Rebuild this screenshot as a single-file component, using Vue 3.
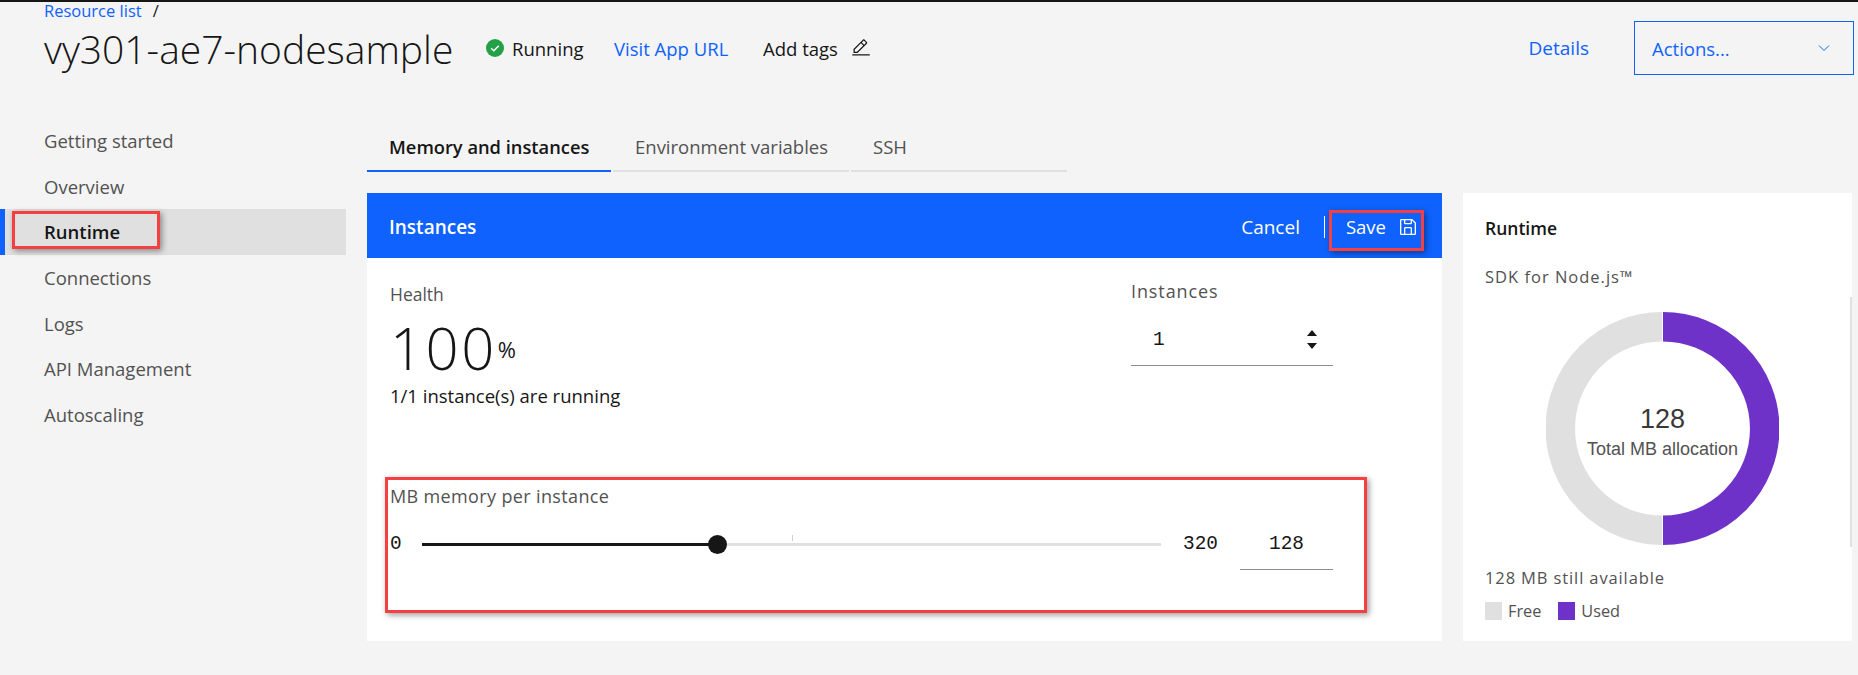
<script setup>
import { computed } from 'vue'

const navItems = ['Getting started', 'Overview', 'Runtime', 'Connections', 'Logs', 'API Management', 'Autoscaling']
const tabs = ['Memory and instances', 'Environment variables', 'SSH']
const memory = 128
const maxMemory = 320
const percent = computed(() => (memory / maxMemory) * 100 + '%')
</script>

<template>
  <div class="page">
    <div class="crumbs"><a class="link">Resource list</a><span class="slash">/</span></div>
    <header class="head">
      <h1>vy301-ae7-nodesample</h1>
      <svg class="status-icon" viewBox="0 0 18 18" width="18" height="18">
        <circle cx="9" cy="9" r="9" fill="#24a148" />
        <path d="M5.2 9.2l2.6 2.6 5-5" fill="none" stroke="#fff" stroke-width="1.5" />
      </svg>
      <span class="status">Running</span>
      <a class="link visit">Visit App URL</a>
      <span class="tags">Add tags</span>
      <svg class="pencil" viewBox="0 0 32 32" width="20" height="20">
        <path fill="#161616" d="M2 26h28v2H2zM25.4 9c.8-.8.8-2 0-2.8l-3.6-3.6c-.8-.8-2-.8-2.8 0l-15 15V24h6.4L25.4 9zM20.4 4L24 7.6l-3 3L17.4 7 20.4 4zM6 22v-3.6l10-10 3.6 3.6-10 10H6z" />
      </svg>
      <a class="link details">Details</a>
      <div class="actions">
        <span>Actions...</span>
        <svg viewBox="0 0 16 16" width="16" height="16">
          <path d="M3 5.5l5 5 5-5" fill="none" stroke="#0f62fe" stroke-width="1" />
        </svg>
      </div>
    </header>

    <div class="body">
      <nav class="nav">
        <div v-for="item in navItems" :key="item" class="nav-item" :class="{ active: item === 'Runtime' }">{{ item }}</div>
      </nav>

      <main class="main">
        <div class="tabs">
          <div v-for="(tab, i) in tabs" :key="tab" class="tab" :class="{ selected: i === 0 }">{{ tab }}</div>
        </div>

        <div class="cards">
          <section class="card instances">
            <div class="bar">
              <strong>Instances</strong>
              <div class="bar-actions">
                <span class="cancel">Cancel</span>
                <i class="divider"></i>
                <span class="save">Save</span>
                <svg viewBox="4 4 24 24" width="16" height="16">
                  <path fill="#fff" d="M27.71 9.29l-5-5A1 1 0 0 0 22 4H6a2 2 0 0 0-2 2v20a2 2 0 0 0 2 2h20a2 2 0 0 0 2-2V10a1 1 0 0 0-.29-.71zM12 6h8v4h-8zm8 20h-8v-8h8zm2 0v-8a2 2 0 0 0-2-2h-8a2 2 0 0 0-2 2v8H6V6h4v4a2 2 0 0 0 2 2h8a2 2 0 0 0 2-2V6.41l4 4V26z" />
                </svg>
              </div>
            </div>
            <div class="card-body">
              <div class="top-row">
                <div>
                  <div class="label health">Health</div>
                  <div class="big">100<span>%</span></div>
                  <div class="caption">1/1 instance(s) are running</div>
                </div>
                <div class="count">
                  <div class="label wide">Instances</div>
                  <div class="count-input">
                    <span>1</span>
                    <div class="spin"><i class="up"></i><i class="down"></i></div>
                  </div>
                </div>
              </div>
              <div class="label memory-label">MB memory per instance</div>
              <div class="slider">
                <span class="min">0</span>
                <div class="track">
                  <div class="fill" :style="{ width: percent }"></div>
                  <i class="tick"></i>
                  <i class="thumb" :style="{ left: percent }"></i>
                </div>
                <span class="max">{{ maxMemory }}</span>
                <div class="value">{{ memory }}</div>
              </div>
            </div>
          </section>

          <aside class="card runtime">
            <i class="scroll"></i>
            <h2>Runtime</h2>
            <div class="sdk">SDK for Node.js™</div>
            <svg class="donut" viewBox="0 0 233 233" width="233" height="233">
              <path d="M116 14.75a101.75 101.75 0 0 0 0 203.5" fill="none" stroke="#e0e0e0" stroke-width="29.5" />
              <path d="M117 14.75a101.75 101.75 0 0 1 0 203.5" fill="none" stroke="#6f32c8" stroke-width="29.5" />
              <text class="donut-num" x="116.5" y="116" text-anchor="middle">128</text>
              <text class="donut-cap" x="116.5" y="143" text-anchor="middle">Total MB allocation</text>
            </svg>
            <div class="left">128 MB still available</div>
            <div class="legend">
              <i class="swatch free"></i><span>Free</span>
              <i class="swatch used"></i><span>Used</span>
            </div>
          </aside>
        </div>
      </main>
    </div>

    <!-- red annotation boxes drawn over the screenshot -->
    <div class="mark mark-nav"></div>
    <div class="mark mark-save"></div>
    <div class="mark mark-memory"></div>
  </div>
</template>

<style>
html, body { margin: 0; background: #f4f4f4; }
</style>

<style scoped>
.page {
  position: relative;
  height: 673px;
  overflow: hidden;
  background: #f4f4f4;
  border-top: 2px solid #161616;
  font-family: "Open Sans", "Noto Sans", sans-serif;
  font-size: 18.5px;
  color: #161616;
  white-space: nowrap;
}
.link { color: #0f62fe; }
.crumbs {
  height: 15px;
  padding: 1px 0 0 44px;
  margin-bottom: -1px;
  font-size: 16.5px;
  line-height: 15px;
}
.slash { margin-left: 11px; }
.head {
  display: flex;
  align-items: center;
  height: 54px;
  margin-top: 4px;
  padding: 0 4px 0 44px;
}
h1 {
  margin: 0;
  width: 407px;
  font-size: 39px;
  font-weight: 300;
}
.status-icon { margin-left: 35px; }
.status { margin-left: 8px; width: 70px; }
.visit { margin-left: 32px; width: 117px; }
.tags { margin-left: 32px; width: 76px; }
.pencil { margin-left: 12px; }
.details { margin-left: auto; font-size: 19px; }
.actions {
  display: flex;
  align-items: center;
  justify-content: space-between;
  box-sizing: border-box;
  width: 220px;
  height: 54px;
  margin-left: 45px;
  padding: 0 21px 0 17px;
  border: 1px solid #0f62fe;
  color: #0f62fe;
}
.body {
  display: flex;
  margin-top: 43px;
}
.nav {
  width: 346px;
  margin-right: 21px;
}
.nav-item {
  display: flex;
  align-items: center;
  box-sizing: border-box;
  height: 45.6px;
  padding-left: 44px;
  color: #525252;
}
.nav-item.active {
  padding-left: 39px;
  border-left: 5px solid #0f62fe;
  background: #e0e0e0;
  color: #161616;
  font-weight: 600;
}
.main {
  width: 1485px;
  padding-top: 4px;
}
.tabs {
  display: flex;
  gap: 2px;
  height: 50px;
  margin-bottom: 21px;
}
.tab {
  display: flex;
  align-items: center;
  box-sizing: border-box;
  padding-left: 22px;
  border-bottom: 2px solid #e0e0e0;
  color: #525252;
}
.tab:nth-child(1) { width: 244px; }
.tab:nth-child(2) { width: 236px; }
.tab:nth-child(3) { width: 216px; }
.tab.selected {
  border-bottom-color: #0f62fe;
  color: #161616;
  font-size: 18.3px;
  font-weight: 600;
}
.cards {
  display: flex;
  gap: 21px;
}
.card {
  height: 448px;
  background: #fff;
}
.instances { width: 1075px; }
.bar {
  display: flex;
  align-items: center;
  justify-content: space-between;
  box-sizing: border-box;
  height: 65px;
  padding: 2px 26px 0 22px;
  background: #0f62fe;
  color: #fff;
}
.bar strong { font-size: 19px; font-weight: 600; }
.bar-actions {
  display: flex;
  align-items: center;
}
.cancel { font-size: 19px; }
.divider {
  width: 1px;
  height: 22px;
  margin: 0 21px 0 24px;
  background: #fff;
}
.save { margin-right: 14px; }
.card-body { padding: 25px 109px 0 23px; }
.top-row {
  display: flex;
  justify-content: space-between;
}
.label {
  color: #525252;
  line-height: 22px;
}
.health { font-size: 17.5px; }
.wide {
  font-size: 18px;
  letter-spacing: 0.9px;
}
.big {
  margin-top: 13px;
  font-size: 58px;
  font-weight: 300;
  letter-spacing: 2.5px;
  line-height: 60px;
}
.big span {
  margin-left: 1px;
  font-size: 22px;
  font-weight: 400;
  letter-spacing: 0;
  vertical-align: 12px;
}
.caption {
  margin-top: 6px;
  line-height: 22px;
}
.count {
  width: 202px;
  margin-top: -3px;
}
.count-input {
  display: flex;
  align-items: center;
  justify-content: space-between;
  box-sizing: border-box;
  height: 55px;
  margin-top: 9px;
  padding: 3px 16px 0 22px;
  border-bottom: 1px solid #8d8d8d;
  font-family: "Liberation Mono", monospace;
  font-size: 19.4px;
}
.spin {
  display: flex;
  flex-direction: column;
  gap: 7px;
}
.spin i {
  width: 0;
  height: 0;
  border-left: 5.5px solid transparent;
  border-right: 5.5px solid transparent;
}
.up { border-bottom: 6px solid #161616; }
.down { border-top: 6px solid #161616; }
.memory-label {
  margin-top: 78px;
  font-size: 18px;
  letter-spacing: 0.36px;
}
.slider {
  display: flex;
  align-items: center;
  height: 52px;
  margin-top: 11px;
  font-family: "Liberation Mono", monospace;
  font-size: 19.4px;
}
.min { width: 32px; }
.track {
  position: relative;
  flex: 1;
  height: 3px;
  background: #e0e0e0;
}
.fill {
  height: 100%;
  background: #161616;
}
.tick {
  position: absolute;
  left: 50%;
  top: -8px;
  width: 1px;
  height: 6px;
  background: #d0d0d0;
}
.thumb {
  position: absolute;
  top: -8px;
  width: 19px;
  height: 19px;
  margin-left: -9.5px;
  border-radius: 50%;
  background: #161616;
}
.max { margin: 0 22px; }
.value {
  display: flex;
  align-items: center;
  justify-content: center;
  box-sizing: border-box;
  width: 93px;
  height: 52px;
  padding-top: 1px;
  border-bottom: 1px solid #8d8d8d;
}
.runtime {
  position: relative;
  width: 389px;
  box-sizing: border-box;
  padding: 24px 0 0 22px;
}
.scroll {
  position: absolute;
  right: 0;
  top: 104px;
  width: 2px;
  height: 250px;
  background: #e0e0e0;
}
h2 {
  margin: 0;
  font-size: 17.5px;
  font-weight: 600;
  line-height: 22px;
}
.sdk {
  margin-top: 27px;
  color: #525252;
  font-size: 16.5px;
  letter-spacing: 1px;
  line-height: 22px;
}
.donut {
  display: block;
  margin: 24px 0 0 61px;
}
.donut-num {
  font-family: "Liberation Sans", Arial, sans-serif;
  font-size: 27px;
  fill: #393939;
}
.donut-cap {
  font-family: "Liberation Sans", Arial, sans-serif;
  font-size: 18px;
  fill: #525252;
}
.left {
  margin-top: 22px;
  color: #525252;
  font-size: 16.5px;
  letter-spacing: 0.88px;
  line-height: 22px;
}
.legend {
  display: flex;
  align-items: center;
  height: 18px;
  margin-top: 13px;
  color: #525252;
  font-size: 16.3px;
}
.swatch {
  width: 17px;
  height: 18px;
  margin-right: 6px;
}
.free { background: #e0e0e0; }
.used {
  margin-left: 17px;
  background: #6f32c8;
}
.mark {
  position: absolute;
  box-sizing: border-box;
  border: 3px solid #f44040;
  box-shadow: 2px 2px 6px rgba(0, 0, 0, 0.4);
}
.mark-nav { left: 12px; top: 209px; width: 148px; height: 38px; }
.mark-save { left: 1329px; top: 208px; width: 95px; height: 41px; }
.mark-memory { left: 385px; top: 475px; width: 982px; height: 136px; }
</style>
